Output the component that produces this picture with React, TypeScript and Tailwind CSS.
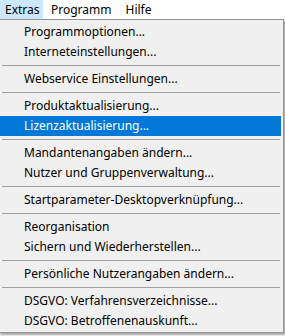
const GROUPS: string[][] = [
  ["Programmoptionen...", "Interneteinstellungen..."],
  ["Webservice Einstellungen..."],
  ["Produktaktualisierung...", "Lizenzaktualisierung..."],
  ["Mandantenangaben ändern...", "Nutzer und Gruppenverwaltung..."],
  ["Startparameter-Desktopverknüpfung..."],
  ["Reorganisation", "Sichern und Wiederherstellen..."],
  ["Persönliche Nutzerangaben ändern..."],
  ["DSGVO: Verfahrensverzeichnisse...", "DSGVO: Betroffenenauskunft..."],
];

const ACTIVE = "Lizenzaktualisierung...";

export default function App() {
  return (
    <div className="w-[285px] h-[336px] bg-white overflow-hidden text-[12px] text-black font-['Noto_Sans',sans-serif]">
      {/* Menubar */}
      <div className="flex h-[19px] items-center bg-white">
        <span className="h-full w-[43px] pl-[5px] flex items-center bg-[#cce8ff]">Extras</span>
        <span className="ml-[8px]">Programm</span>
        <span className="ml-[14px]">Hilfe</span>
      </div>

      {/* Dropdown */}
      <div className="ml-[-2px] w-[286px] h-[314px] bg-[#f0f0f0] border border-[#979797] pt-[2px] shadow-[2px_2px_2px_rgba(0,0,0,0.35)]">
        {GROUPS.map((group, gi) => (
          <div key={gi}>
            {gi > 0 && (
              <div className="h-[7px] flex items-center px-[3px]">
                <div className="h-px w-full bg-[#a0a0a0]" />
              </div>
            )}
            {group.map((label) => (
              <div
                key={label}
                className={`h-[20px] flex items-center pl-[24px] ml-[1px] mr-[2px] leading-none ${
                  label === ACTIVE ? "bg-[#0078d7] text-white" : ""
                }`}
              >
                {label}
              </div>
            ))}
          </div>
        ))}
      </div>
    </div>
  );
}
